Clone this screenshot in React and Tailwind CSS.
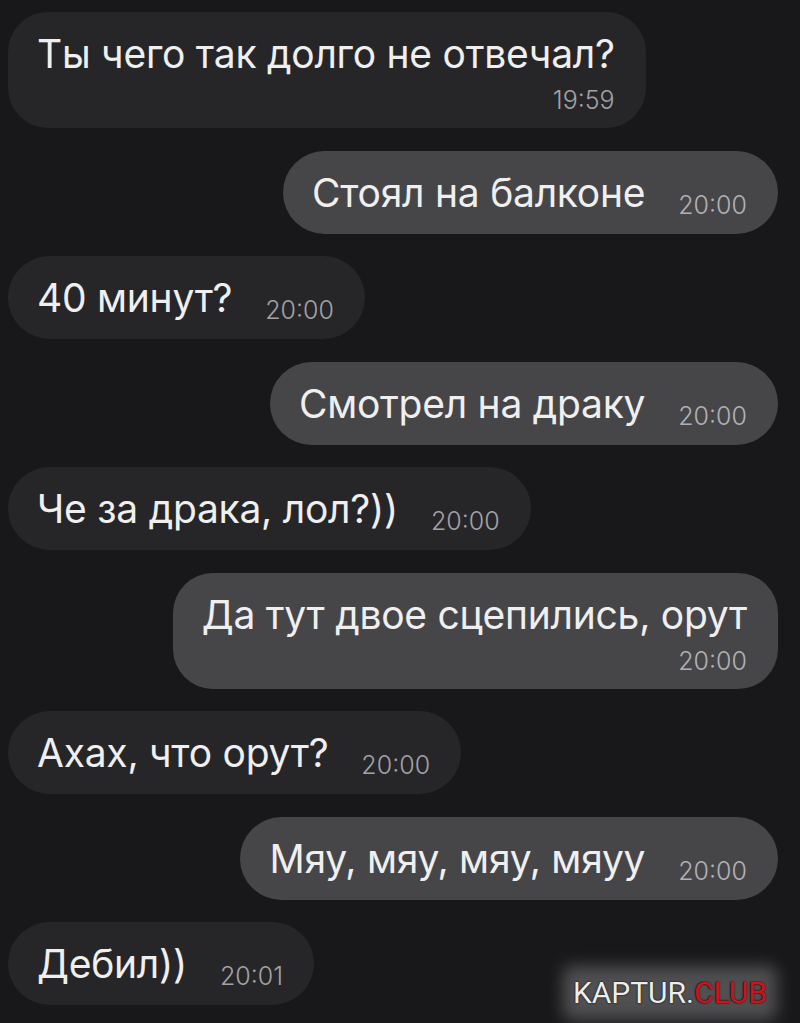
import React from "react";

const messages = [
  { out: false, text: "Ты чего так долго не отвечал?", time: "19:59", multi: true },
  { out: true, text: "Стоял на балконе", time: "20:00" },
  { out: false, text: "40 минут?", time: "20:00" },
  { out: true, text: "Смотрел на драку", time: "20:00" },
  { out: false, text: "Че за драка, лол?))", time: "20:00" },
  { out: true, text: "Да тут двое сцепились, орут", time: "20:00", multi: true },
  { out: false, text: "Ахах, что орут?", time: "20:00" },
  { out: true, text: "Мяу, мяу, мяу, мяуу", time: "20:00" },
  { out: false, text: "Дебил))", time: "20:01" },
];

function Bubble({ m }) {
  const base = m.out
    ? "self-end mr-[22px] bg-[#464649]"
    : "self-start ml-2 bg-[#262628]";
  const timeColor = m.out ? "text-[#b1b1b5]" : "text-[#a2a2a6]";
  if (m.multi) {
    return (
      <div className={`${base} rounded-[40px] pl-[29px] pr-[31px] pt-[18px] pb-[14px] flex flex-col`}>
        <div className="text-[39px] leading-[48px] tracking-[-0.25px] text-[#efefef]">{m.text}</div>
        <div className={`self-end mt-2 text-[25px] leading-[28px] font-light ${timeColor}`}>{m.time}</div>
      </div>
    );
  }
  return (
    <div className={`${base} rounded-full pl-[29px] pr-[31px] pt-[18px] pb-[17px] flex items-baseline`}>
      <span className="text-[39px] leading-[48px] tracking-[-0.25px] text-[#efefef]">{m.text}</span>
      <span className={`ml-[33px] text-[25px] leading-[28px] font-light translate-y-[7px] ${timeColor}`}>{m.time}</span>
    </div>
  );
}

export default function App() {
  return (
    <div
      className="relative w-[800px] h-[1023px] overflow-hidden bg-[#18181a] pt-3 flex flex-col gap-[22.5px]"
      style={{ fontFamily: "Inter, 'Noto Sans', sans-serif" }}
    >
      {messages.map((m, i) => (
        <Bubble key={i} m={m} />
      ))}
      <div className="absolute right-[33px] bottom-[13px] flex items-center justify-center">
        <div className="absolute inset-[-10px] rounded-[8px] bg-[#5e5e60] blur-[8px] opacity-80" />
        <span
          className="relative text-[30px] leading-[34px] font-normal"
          style={{ fontFamily: "Roboto, sans-serif" }}
        >
          <span className="text-[#ededed] [text-shadow:0_0_2px_#111,0_0_1px_#111]">KAPTUR.</span>
          <span className="text-[#d0121c] [text-shadow:0_0_2px_#111,0_0_1px_#111]">CLUB</span>
        </span>
      </div>
    </div>
  );
}
